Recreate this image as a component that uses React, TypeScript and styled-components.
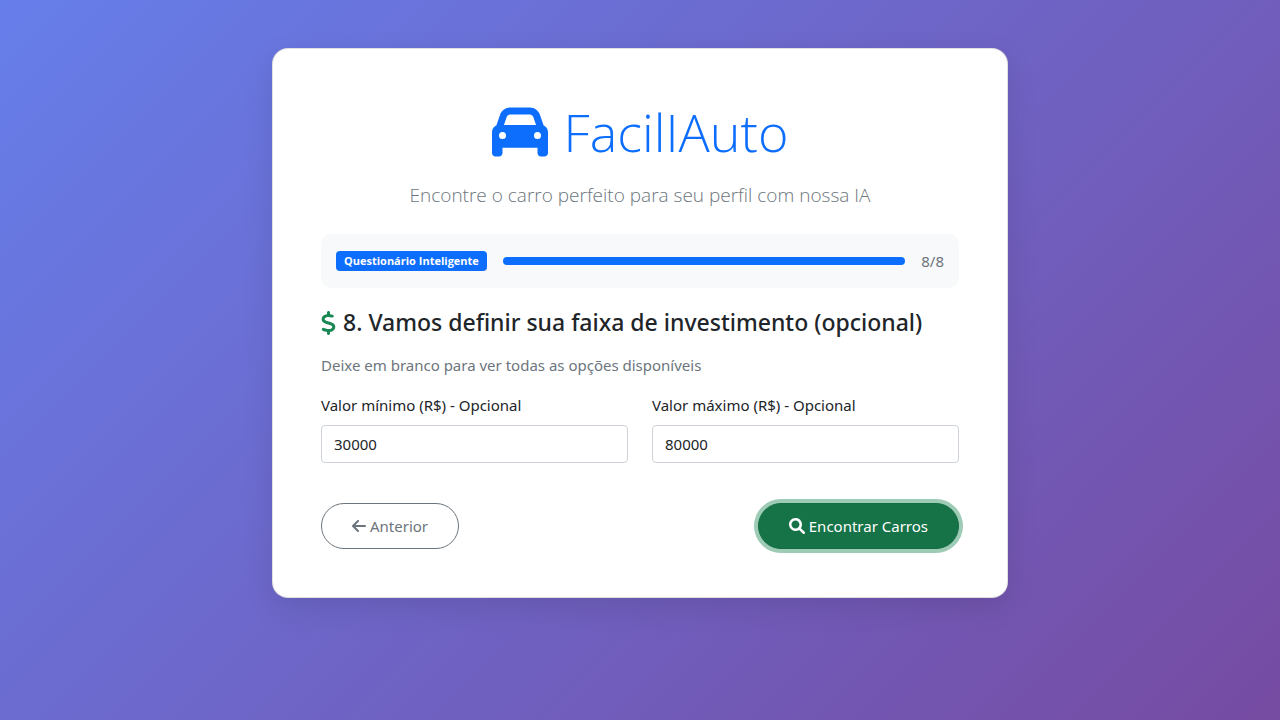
import React, { useState } from "react";
import styled, { createGlobalStyle } from "styled-components";
import { FaArrowLeft, FaCar, FaDollarSign } from "react-icons/fa6";

const displayFont = `"Segoe UI", "Open Sans", sans-serif`;

const GlobalStyle = createGlobalStyle`
  *, *::before, *::after { box-sizing: border-box; }
  body {
    margin: 0;
    min-height: 100vh;
    background: linear-gradient(135deg, #667eea 0%, #764ba2 100%) no-repeat;
    color: #212529;
    font-family: "Segoe UI", "Noto Sans", "Open Sans", sans-serif;
    font-size: 15px;
    line-height: 24px;
  }
  h1, h2, p { margin: 0; }
  button, input { font: inherit; }
`;

const Page = styled.main`
  padding: 48px 12px;
`;

const Card = styled.section`
  max-width: 736px;
  margin: 0 auto;
  padding: 48px;
  background: #fff;
  border: 1px solid rgba(0, 0, 0, 0.125);
  border-radius: 16px;
  box-shadow: 0 10px 30px rgba(0, 0, 0, 0.1);
`;

const Header = styled.header`
  margin-bottom: 24px;
  padding-top: 3px;
  font-family: ${displayFont};
  text-align: center;
`;

const Brand = styled.h1`
  display: flex;
  align-items: center;
  justify-content: center;
  gap: 16px;
  margin-bottom: 16px;
  color: #0d6efd;
  font-size: 52px;
  font-weight: 300;
  line-height: 64px;
`;

const CarIcon = styled(FaCar)`
  width: 56px;
  height: 56px;
`;

const Tagline = styled.p`
  color: #6c757d;
  font-size: 19px;
  font-weight: 300;
  line-height: 30px;
`;

const ProgressPanel = styled.div`
  display: flex;
  align-items: center;
  gap: 16px;
  margin-bottom: 20px;
  padding: 15px;
  background: #f8f9fa;
  border-radius: 10px;
`;

const Badge = styled.span`
  padding: 4px 8px;
  background: #0d6efd;
  border-radius: 4px;
  color: #fff;
  font-family: ${displayFont};
  font-size: 11px;
  font-weight: 700;
  line-height: 12px;
  white-space: nowrap;
`;

const Track = styled.div`
  flex: 1;
  height: 8px;
  overflow: hidden;
  background: #e9ecef;
  border-radius: 4px;
`;

const Fill = styled.div`
  height: 100%;
  background: #0d6efd;
`;

const Muted = styled.span`
  color: #6c757d;
`;

const Question = styled.h2`
  display: flex;
  align-items: center;
  gap: 7px;
  margin-bottom: 16px;
  font-size: 23px;
  font-weight: 500;
  line-height: 29px;
`;

const DollarIcon = styled(FaDollarSign)`
  flex: none;
  width: 15px;
  height: 24px;
  color: #198754;
`;

const Hint = styled.p`
  margin-bottom: 16px;
  color: #6c757d;
`;

const Fields = styled.div`
  display: grid;
  grid-template-columns: 1fr 1fr;
  gap: 24px;
  margin-bottom: 40px;
`;

const Field = styled.div`
  display: flex;
  flex-direction: column;
  gap: 8px;
`;

const TextInput = styled.input`
  width: 100%;
  height: 38px;
  padding: 6px 12px;
  background: #fff;
  border: 1px solid #ced4da;
  border-radius: 4px;
  color: #212529;
  outline: none;
  appearance: textfield;

  &::-webkit-inner-spin-button { appearance: none; margin: 0; }
`;

const Actions = styled.div`
  display: flex;
  justify-content: space-between;
`;

const PillButton = styled.button<{ $primary?: boolean }>`
  display: inline-flex;
  align-items: center;
  gap: 4px;
  padding: 10px 30px;
  background: ${(p) => (p.$primary ? "#157347" : "transparent")};
  border: 1px solid ${(p) => (p.$primary ? "#146c43" : "#6c757d")};
  border-radius: 25px;
  box-shadow: ${(p) => (p.$primary ? "0 0 0 4px #9dcbb5" : "none")};
  color: ${(p) => (p.$primary ? "#fff" : "#6c757d")};
  outline: none;
  cursor: pointer;
`;

const BackIcon = styled(FaArrowLeft)`
  width: 14px;
  height: 16px;
`;

const SearchSvg = styled.svg`
  width: 16px;
  height: 16px;
  fill: currentColor;
`;

function SearchIcon() {
  return (
    <SearchSvg viewBox="0 0 512 512" aria-hidden>
      <path d="M500.3 443.7l-119.7-119.7c27.22-40.41 40.65-90.9 33.46-144.7C401.8 87.79 326.8 13.32 235.2 1.723C99.01-15.51-15.51 99.01 1.724 235.2c11.6 91.64 86.08 166.7 177.6 178.9c53.8 7.189 104.3-6.236 144.7-33.46l119.7 119.7c15.62 15.62 40.95 15.62 56.57 0C515.9 484.7 515.9 459.3 500.3 443.7zM79.1 208c0-70.58 57.42-128 128-128s128 57.42 128 128c0 70.58-57.42 128-128 128S79.1 278.6 79.1 208z" />
    </SearchSvg>
  );
}

const TOTAL_STEPS = 8;

export default function App() {
  const step = 8;
  const [minimum, setMinimum] = useState("30000");
  const [maximum, setMaximum] = useState("80000");

  return (
    <>
      <GlobalStyle />
      <Page>
        <Card>
          <Header>
            <Brand>
              <CarIcon aria-hidden />
              FacilIAuto
            </Brand>
            <Tagline>Encontre o carro perfeito para seu perfil com nossa IA</Tagline>
          </Header>

          <ProgressPanel>
            <Badge>Questionário Inteligente</Badge>
            <Track
              role="progressbar"
              aria-label="Progresso"
              aria-valuenow={step}
              aria-valuemin={0}
              aria-valuemax={TOTAL_STEPS}
            >
              <Fill style={{ width: `${(step / TOTAL_STEPS) * 100}%` }} />
            </Track>
            <Muted>{`${step}/${TOTAL_STEPS}`}</Muted>
          </ProgressPanel>

          <form onSubmit={(e) => e.preventDefault()}>
            <Question>
              <DollarIcon aria-hidden />
              8. Vamos definir sua faixa de investimento (opcional)
            </Question>
            <Hint>Deixe em branco para ver todas as opções disponíveis</Hint>
            <Fields>
              <Field>
                <label htmlFor="minimum">Valor mínimo (R$) - Opcional</label>
                <TextInput
                  id="minimum"
                  type="number"
                  value={minimum}
                  onChange={(e) => setMinimum(e.target.value)}
                />
              </Field>
              <Field>
                <label htmlFor="maximum">Valor máximo (R$) - Opcional</label>
                <TextInput
                  id="maximum"
                  type="number"
                  value={maximum}
                  onChange={(e) => setMaximum(e.target.value)}
                />
              </Field>
            </Fields>
            <Actions>
              <PillButton type="button">
                <BackIcon aria-hidden />
                Anterior
              </PillButton>
              <PillButton type="submit" $primary>
                <SearchIcon />
                Encontrar Carros
              </PillButton>
            </Actions>
          </form>
        </Card>
      </Page>
    </>
  );
}
